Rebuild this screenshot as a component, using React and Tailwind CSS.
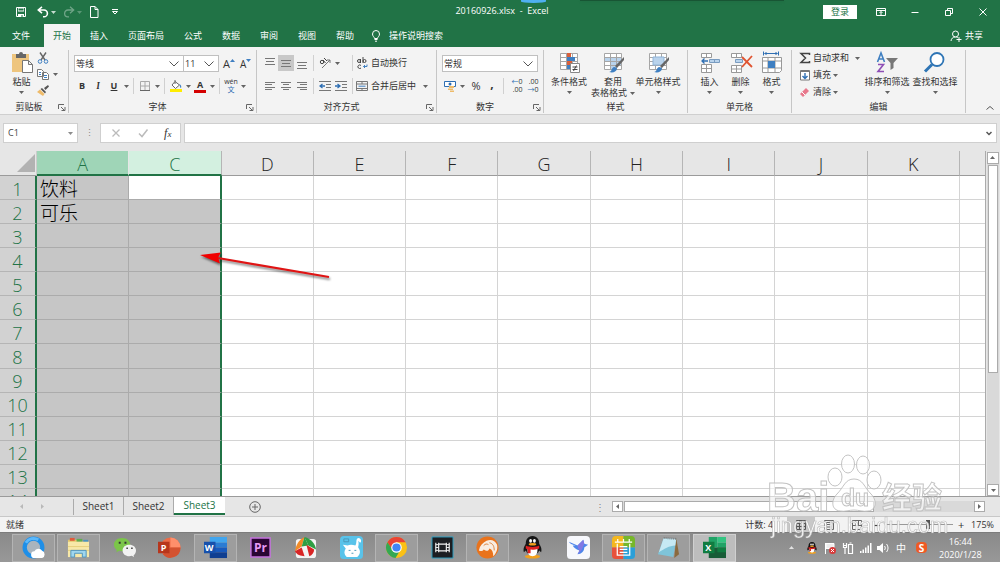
import { useState } from "react";

const COLUMNS = ["A", "C", "D", "E", "F", "G", "H", "I", "J", "K"];
const ROWS = [
  ["饮料"],
  ["可乐"],
  [], [], [], [], [], [], [], [], [], [], [], [],
];
const TABS = ["开始", "插入", "页面布局", "公式", "数据", "审阅", "视图", "帮助"];
const SHEETS = ["Sheet1", "Sheet2", "Sheet3"];

const App = () => {
  const [sheet, setSheet] = useState("Sheet3");

  return (
    <div className="flex h-screen flex-col overflow-hidden bg-[#e6e6e6] font-['Open_Sans','Noto_Sans_CJK_SC',sans-serif] text-[9px] leading-3 text-[#333]">
      <TitleBar />
      <RibbonTabs />
      <Ribbon />
      <FormulaBar />
      <Sheet />
      <SheetBar sheet={sheet} setSheet={setSheet} />
      <StatusBar />
      <Taskbar />
      <Watermark />
    </div>
  );
};

export default App;

/* ===== SMALL PARTS ===== */
const Caret = () => (
  <svg viewBox="0 0 5 3" className="h-[3px] w-[5px] shrink-0 opacity-75" fill="currentColor">
    <path d="M0 0h5L2.5 3z" />
  </svg>
);

const Chevron = () => (
  <svg viewBox="0 0 10 6" className="pointer-events-none mr-1 h-[6px] w-[10px] shrink-0" fill="none" stroke="#555">
    <path d="M.5.5 5 5 9.500.5" />
  </svg>
);

const Divider = () => <span className="mx-[3px] h-4 w-px shrink-0 bg-[#d0d0d0]" />;

const Drop = ({ label }) => (
  <button aria-label={label} className="flex h-4 w-2 items-center justify-center">
    <Caret />
  </button>
);

const IconButton = ({ label, active, children }) => (
  <button
    aria-label={label}
    className={`flex h-4 w-4 shrink-0 items-center justify-center ${active ? "bg-[#c8c8c8]" : ""}`}
  >
    {children}
  </button>
);

const Icon = ({ size = 12, className = "", children }) => (
  <svg viewBox={`0 0 ${size} ${size}`} width={size} height={size} fill="none" className={`shrink-0 ${className}`}>
    {children}
  </svg>
);

const Lines = ({ rows }) => (
  <Icon>
    {rows.map(([x, y, w]) => (
      <path key={y} d={`M${x} ${y}.5h${w}`} stroke="#777" />
    ))}
  </Icon>
);

const Combo = ({ label, value, className }) => (
  <label className={`flex h-[17px] items-center border border-[#c0c0c0] bg-white ${className}`}>
    <select aria-label={label} defaultValue={value} className="min-w-0 flex-1 appearance-none bg-transparent pl-px outline-none">
      <option>{value}</option>
    </select>
    <Chevron />
  </label>
);

/* ===== TITLE BAR ===== */
const TitleBar = () => (
  <header className="relative flex h-6 shrink-0 items-center bg-[#217346] text-white">
    <div className="flex flex-1 items-center pl-[15px]">
      <button aria-label="保存" className="mr-[10px]">
        <Icon>
          <path d="M1.500 1.500h9v9h-9z" stroke="currentColor" />
          <path d="M3 2h6v3.500H3zM3 8h6v3H3z" fill="currentColor" />
          <path d="M3.500 2.500h5v2h-5zM6.500 9h1v2h-1z" fill="#217346" />
        </Icon>
      </button>
      <button aria-label="撤消">
        <Icon>
          <path d="M5 .8 1.300 4 5 7.200M1.500 4H7a3.200 3.200 0 0 1 0 6.800H6" stroke="currentColor" strokeWidth="1.600" />
        </Icon>
      </button>
      <Drop label="撤消选项" />
      <button aria-label="恢复" className="ml-[6px] opacity-35">
        <Icon>
          <path d="m7 .8 3.700 3.200L7 7.200M10.500 4H5a3.200 3.200 0 0 0 0 6.800h1" stroke="currentColor" strokeWidth="1.300" />
        </Icon>
      </button>
      <span className="opacity-35"><Drop label="恢复选项" /></span>
      <button aria-label="新建" className="ml-[5px]">
        <Icon>
          <path d="M2.500.500h4.500l3 3v8h-7.500zM7 .500v3h3" stroke="currentColor" />
        </Icon>
      </button>
      <button aria-label="自定义快速访问工具栏" className="ml-[9px]">
        <Icon>
          <path d="M3 3.500h6M3.500 5.500h5L6 8z" stroke="currentColor" />
        </Icon>
      </button>
    </div>
    <h1 className="whitespace-pre pb-[2px]">20160926.xlsx  -  Excel</h1>
    <div className="flex flex-1 items-center justify-end gap-[22px] pr-[11px]">
      <button className="mr-[-4px] h-[14px] w-[34px] bg-white text-[#217346]">登录</button>
      <button aria-label="功能区显示选项">
        <Icon>
          <path d="M1.500 2.500h9v7h-9zM1.500 4.500h9M6 9V5.500M4.500 7 6 5.500 7.500 7" stroke="currentColor" />
        </Icon>
      </button>
      <button aria-label="最小化">
        <Icon><path d="M2.500 6.500h7" stroke="currentColor" /></Icon>
      </button>
      <button aria-label="还原">
        <Icon><path d="M2.500 4.500h5v5h-5zM4.500 4V2.500h5v5H8" stroke="currentColor" /></Icon>
      </button>
      <button aria-label="关闭">
        <Icon><path d="m2.500 2.500 7 7m0-7-7 7" stroke="currentColor" /></Icon>
      </button>
    </div>
    <span className="absolute left-[521px] top-0 h-[3px] w-[25px] rounded-b-[100%] bg-[#4fb0f0]" />
    <span className="absolute left-[580px] top-0 h-px w-[204px] bg-[#185534] shadow-sm" />
  </header>
);

/* ===== RIBBON TABS ===== */
const RibbonTabs = () => (
  <nav className="flex h-[23px] shrink-0 items-stretch bg-[#217346] text-white">
    <button className="w-[44px] pr-[2px]">文件</button>
    {TABS.map((tab) => (
      <button
        key={tab}
        className={tab === "开始" ? "w-9 bg-[#f3f3f3] text-[#217346]" : "px-[9.500px] px-[10px]"}
      >
        {tab}
      </button>
    ))}
    <label className="ml-[6px] flex items-center gap-[7px]">
      <Icon>
        <path d="M4.500 8.500C4.500 7 2.500 6.500 2.500 4a3.500 3.500 0 0 1 7 0c0 2.500-2 3-2 4.500zM4.500 9.500h3M5 11.200h2" stroke="currentColor" />
      </Icon>
      <input placeholder="操作说明搜索" className="w-20 bg-transparent outline-none placeholder:text-white" />
    </label>
    <button className="ml-auto flex items-center gap-[3px] pr-[17px]">
      <Icon>
        <path d="M1 11c.3-2.500 2-4 4-4M5.500 7a3 3 0 1 0 0-6 3 3 0 0 0 0 6zm0 0c1.500 0 2 .500 2.500 1M9 7v5M6.500 9.500h5" stroke="currentColor" />
      </Icon>
      共享
    </button>
  </nav>
);

/* ===== RIBBON ===== */
const Group = ({ title, launcher, className, children }) => (
  <section className={`flex shrink-0 flex-col border-r border-[#c6c6c6] ${className}`}>
    <div className="flex-1">{children}</div>
    <div className="flex h-3 items-center">
      <h2 className="flex-1 text-center">{title}</h2>
      {launcher && (
        <button aria-label={`${title}设置`} className="mr-[2px]">
          <Icon size={8}>
            <path d="M.5 6V1.500H6M3 4l3.500 3.500M7 4v3.500H3.500" stroke="#666" />
          </Icon>
        </button>
      )}
    </div>
  </section>
);

const BigButton = ({ icon, label, second, className }) => (
  <button className={`flex flex-col items-center whitespace-nowrap ${className}`}>
    {icon}
    <span className="mt-[2px]">{label}</span>
    {second ? (
      <span className="flex items-center gap-[3px] leading-[10px]">{second}<Caret /></span>
    ) : (
      <span className="mt-[3px]"><Caret /></span>
    )}
  </button>
);

const Grid = ({ children }) => (
  <Icon size={24}>
    <path d="M3.500 3.500h17v16h-17zM3.500 7.500h17M3.500 11.500h17M3.500 15.500h17M9.500 3.500v16M15.500 3.500v16" fill="#fff" stroke="#a6a6a6" />
    {children}
  </Icon>
);

const Brush = () => (
  <>
    <path d="m23 7-9 9 2 2 7-8z" fill="#666" />
    <path d="M8 22c3 0 2-4 5-5 2 0 3 1 3 2-1 3-4 4-8 3z" fill="#3f7fc1" />
  </>
);

const Ribbon = () => (
  <div className="flex h-[68px] shrink-0 border-b border-[#cfcfcf] bg-[#f3f3f3] pb-px pt-[3px]">
    <Group title="剪贴板" launcher className="w-[69px]">
      <div className="flex pl-2">
        <BigButton
          label="粘贴"
          className="w-[27px]"
          icon={
            <Icon size={24}>
              <path d="M2 4h17v18H2z" fill="#eec57e" />
              <path d="M6 4h3a2 2 0 0 1 4 0h3v4H6z" fill="#666" />
              <path d="M12.500 10.500h6l4 4v8h-10zM18.500 10.500v4h4" fill="#fff" stroke="#777" />
            </Icon>
          }
        />
        <div className="flex flex-col">
          <IconButton label="剪切">
            <Icon>
              <path d="M3 .500 8 8M9 .500 4 8" stroke="#666" strokeWidth="1.400" />
              <circle cx="3" cy="9.500" r="1.800" stroke="#3f7fc1" />
              <circle cx="9" cy="9.500" r="1.800" stroke="#3f7fc1" />
            </Icon>
          </IconButton>
          <div className="flex">
            <IconButton label="复制">
              <Icon>
                <path d="M.5 1.500h4l2 2v5h-6zM5.500 4.500h4l2 2v5h-6z" fill="#fff" stroke="#777" />
                <path d="M7 7.500h3M7 9.500h3M2 4.500h2M2 6.500h2" stroke="#3f7fc1" />
              </Icon>
            </IconButton>
            <Drop label="复制选项" />
          </div>
          <IconButton label="格式刷">
            <Icon>
              <path d="m11 1-4 3 1.500 2L12 2.500zM5 4l4 4-1 1.500L3.500 5z" fill="#555" />
              <path d="M3 5.500 7.500 10 6 12l-6-4z" fill="#eebb6a" />
            </Icon>
          </IconButton>
        </div>
      </div>
    </Group>

    <Group title="字体" launcher className="w-[188px]">
      <div className="flex flex-col gap-[6px] pl-[5px] pt-[5px]">
        <div className="flex items-center">
          <Combo label="字体" value="等线" className="w-[110px]" />
          <Combo label="字号" value="11" className="w-[35px] border-l-0" />
          <button aria-label="增大字号" className="ml-[4px] flex text-[11px]">A<span className="text-[#3f7fc1]"><Icon size={5}><path d="M0 4 2.500 1 5 4z" fill="currentColor" /></Icon></span></button>
          <button aria-label="减小字号" className="ml-[5px] flex text-[10px]">A<span className="text-[#3f7fc1]"><Icon size={5}><path d="M0 1h5L2.500 4z" fill="currentColor" /></Icon></span></button>
        </div>
        <div className="flex items-center">
          <IconButton label="加粗"><b>B</b></IconButton>
          <IconButton label="倾斜"><b className="font-serif italic">I</b></IconButton>
          <IconButton label="下划线"><b className="underline">U</b></IconButton>
          <Drop label="下划线选项" />
          <Divider />
          <IconButton label="边框">
            <Icon>
              <path d="M1.500 1.500h9v9h-9zM6 1.500v9M1.500 6h9" stroke="#aaa" />
              <path d="M1 10.500h10" stroke="#666" />
            </Icon>
          </IconButton>
          <Drop label="边框选项" />
          <Divider />
          <IconButton label="填充颜色">
            <Icon>
              <path d="m5 1.500 4.500 3.500-4 3.500L2 5z" fill="#fff" stroke="#666" />
              <path d="M5 0v4" stroke="#666" />
              <path d="M9.500 4c2 1 2 3 1.500 4-1 0-1-2-1.500-4z" fill="#3f7fc1" />
              <path d="M0 9h12v3H0z" fill="#ffed00" />
            </Icon>
          </IconButton>
          <Drop label="填充颜色选项" />
          <IconButton label="字体颜色">
            <span className="w-3 border-b-[3px] border-[#d40000] text-center font-bold leading-[10px]">A</span>
          </IconButton>
          <Drop label="字体颜色选项" />
          <Divider />
          <IconButton label="拼音">
            <span className="text-center text-[7px] leading-[8px]">wén<br /><span className="text-[#2f6fb3]">文</span></span>
          </IconButton>
          <Drop label="拼音选项" />
        </div>
      </div>
    </Group>

    <Group title="对齐方式" launcher className="w-[180px]">
      <div className="flex flex-col gap-[7px] pl-[5px] pt-[5px]">
        <div className="flex items-center">
          <IconButton label="顶端对齐"><Lines rows={[[1, 1, 10], [2, 4, 8], [1, 7, 10]]} /></IconButton>
          <IconButton label="垂直居中" active><Lines rows={[[1, 3, 10], [2, 6, 8], [1, 9, 10]]} /></IconButton>
          <IconButton label="底端对齐"><Lines rows={[[1, 5, 10], [2, 8, 8], [1, 11, 10]]} /></IconButton>
          <Divider />
          <IconButton label="方向">
            <Icon>
              <path d="m3 11 8-8M11 6V3H8" stroke="#777" />
              <circle cx="3" cy="5" r="1.700" stroke="#444" />
              <path d="m4 3 2.500 3M5 1l3 3" stroke="#444" />
            </Icon>
          </IconButton>
          <Drop label="方向选项" />
          <span className="w-2" />
          <Divider />
          <button className="flex items-center gap-[3px] whitespace-nowrap">
            <Icon>
              <circle cx="3" cy="4" r="1.500" stroke="#444" />
              <path d="M4.500 2v4M7 0v6" stroke="#444" />
              <circle cx="8.500" cy="4" r="1.500" stroke="#444" />
              <path d="M5 8.500a1.800 1.800 0 1 0 0 2.500" stroke="#444" />
              <path d="M11 7.500v2H7.500M9 8 7.500 9.500 9 11" stroke="#3f7fc1" />
            </Icon>
            自动换行
          </button>
        </div>
        <div className="flex items-center">
          <IconButton label="左对齐"><Lines rows={[[1, 2, 10], [1, 4, 7], [1, 7, 10], [1, 9, 7]]} /></IconButton>
          <IconButton label="居中"><Lines rows={[[1, 2, 10], [3, 4, 6], [1, 7, 10], [3, 9, 6]]} /></IconButton>
          <IconButton label="右对齐"><Lines rows={[[1, 2, 10], [4, 4, 7], [1, 7, 10], [4, 9, 7]]} /></IconButton>
          <Divider />
          <IconButton label="减少缩进量">
            <Icon>
              <path d="M0 1.500h12M7 4.500h5M7 7.500h5M0 10.500h12" stroke="#777" />
              <path d="M6 6H1m2.500-2L1 6l2.500 2" stroke="#2f6fb3" strokeWidth="1.300" />
            </Icon>
          </IconButton>
          <IconButton label="增加缩进量">
            <Icon>
              <path d="M0 1.500h12M7 4.500h5M7 7.500h5M0 10.500h12" stroke="#777" />
              <path d="M0 6h5M2.500 4 5 6 2.500 8" stroke="#2f6fb3" strokeWidth="1.300" />
            </Icon>
          </IconButton>
          <Divider />
          <button className="flex items-center gap-[3px] whitespace-nowrap">
            <Icon>
              <path d="M.5 1.500h11v9H.5zM.5 4h11M.5 8.500h11M6 1.500V4M6 8.500v2" stroke="#777" />
              <path d="M2.500 6.200h7" stroke="#3f7fc1" />
            </Icon>
            合并后居中
          </button>
          <span className="w-[5px]" />
          <Drop label="合并选项" />
        </div>
      </div>
    </Group>

    <Group title="数字" launcher className="w-[107px]">
      <div className="flex flex-col gap-[6px] pl-[5px] pt-[5px]">
        <Combo label="数字格式" value="常规" className="w-[96px]" />
        <div className="flex items-center">
          <IconButton label="会计数字格式">
            <Icon>
              <path d="M.5 1.500h11v5H.5z" fill="#fff" stroke="#2f6fb3" />
              <circle cx="6" cy="4" r="1.500" fill="#2f6fb3" />
              <path d="M5 6h5v2H5zM4 8.500h5v1.500H4zM6 10.500h4V12H6z" fill="#eebb6a" />
            </Icon>
          </IconButton>
          <Drop label="货币选项" />
          <span className="ml-[2px]"><IconButton label="百分比样式"><span className="text-[11px]">%</span></IconButton></span>
          <IconButton label="千位分隔样式"><b className="pb-1 text-[12px]">,</b></IconButton>
          <Divider />
          <span className="w-[2px]" />
          <IconButton label="增加小数位数">
            <span className="text-right text-[7px] leading-[8px]"><span className="text-[#2f6fb3]">←</span>0<br />.00</span>
          </IconButton>
          <IconButton label="减少小数位数">
            <span className="text-right text-[7px] leading-[8px]">.00<br /><span className="text-[#2f6fb3]">→</span>0</span>
          </IconButton>
        </div>
      </div>
    </Group>

    <Group title="样式" className="w-[144px]">
      <div className="flex pl-[3px]">
        <BigButton
          label="条件格式"
          className="w-[44px]"
          icon={
            <Grid>
              <path d="M10 3h4v4h-4zM10 11h5v4h-5z" fill="#d9603b" />
              <path d="M10 7h8v4h-8zM10 15h3v4h-3z" fill="#3f7fc1" />
              <path d="M13.500 13.500h9v9h-9z" fill="#fff" stroke="#888" />
              <path d="M15.500 17h5M15.500 19.500h5M19.500 15.500l-3 5.500" stroke="#444" />
            </Grid>
          }
        />
        <BigButton
          label="套用"
          second="表格格式"
          className="w-[44px]"
          icon={
            <Grid>
              <path d="M10 8h5v3h-5zM16 8h4v3h-4zM10 12h5v3h-5zM16 12h4v3h-4zM10 16h5v3h-5zM4 8h5v3H4z" fill="#b9d3ec" />
              <Brush />
            </Grid>
          }
        />
        <BigButton
          label="单元格样式"
          className="w-[46px]"
          icon={
            <Grid>
              <path d="M7 7h11v8H7z" fill="#b9d3ec" stroke="#8fb4d9" />
              <Brush />
            </Grid>
          }
        />
      </div>
    </Group>

    <Group title="单元格" className="w-[104px]">
      <div className="flex pl-[6px]">
        <BigButton
          label="插入"
          className="w-[31px]"
          icon={
            <Icon size={24}>
              <path d="M3.500 3.500h10v4h-10zM8.500 3.500v4M3.500 14.500h10v8h-10zM8.500 14.500v8M3.500 18.500h10" fill="#fff" stroke="#999" />
              <path d="M11.500 9.500h10v3h-10zM16.500 9.500v3" fill="#b9d3ec" stroke="#7a9cc0" />
              <path d="M10 11H4m2.500-2.500L4 11l2.500 2.500" stroke="#2f6fb3" strokeWidth="1.300" />
            </Icon>
          }
        />
        <BigButton
          label="删除"
          className="w-[31px]"
          icon={
            <Icon size={24}>
              <path d="M2.500 3.500h10v4h-10zM7.500 3.500v4M2.500 15.500h10v7h-10zM7.500 15.500v7M2.500 19h10" fill="#fff" stroke="#999" />
              <path d="M6.500 9.500h7v3h-7z" fill="#b9d3ec" stroke="#7a9cc0" />
              <path d="m13 7 10 10M23 6 13 17" stroke="#e0532f" strokeWidth="1.800" />
            </Icon>
          }
        />
        <BigButton
          label="格式"
          className="w-[31px]"
          icon={
            <Icon size={24}>
              <path d="M2.500 7.500h19v13l-2 2h-17zM2.500 11h19M2.500 18h19M8 7.500v15M15 7.500v15" fill="#fff" stroke="#999" />
              <path d="M8 11h7v7H8z" fill="#3f7fc1" />
              <path d="M3.500 1.500v4M18.500 1.500v4M4.500 3.500h13M6.500 2 5 3.500 6.500 5M15.500 2 17 3.500 15.500 5" stroke="#2f6fb3" />
            </Icon>
          }
        />
      </div>
    </Group>

    <Group title="编辑" className="w-[174px]">
      <div className="flex pl-[7px]">
        <div className="flex w-[64px] flex-col gap-px whitespace-nowrap">
          <button className="flex h-4 items-center gap-[2px]">
            <Icon><path d="M10.500 3V1.500H2L6.500 6 2 10.500h8.500V9" stroke="#444" strokeWidth="1.500" /></Icon>
            自动求和<span className="ml-[4px]"><Caret /></span>
          </button>
          <button className="flex h-4 items-center gap-[2px]">
            <Icon>
              <path d="M1.500 1.500h9v9.500h-9z" fill="#fff" stroke="#777" />
              <path d="M1 2.500h10" stroke="#777" />
              <path d="M6 4v5.500M3.500 7 6 9.500 8.500 7" stroke="#2f6fb3" strokeWidth="1.400" />
            </Icon>
            填充<Caret />
          </button>
          <button className="flex h-4 items-center gap-[2px]">
            <Icon>
              <path d="m1 8 6-6 3 3-6 6z" fill="#e8788c" />
              <path d="m3 6 3 3" stroke="#fff" />
            </Icon>
            清除<Caret />
          </button>
        </div>
        <BigButton
          label="排序和筛选"
          className="w-12"
          icon={
            <Icon size={24}>
              <path d="m2.500 12 3.500-9 3.500 9M3.500 9h5" stroke="#3f7fc1" strokeWidth="1.600" />
              <path d="M3 14.500h5.500L3 21.500h6" stroke="#8e4fb5" strokeWidth="1.600" />
              <path d="M11 8h12l-4.500 5v5l-3 2v-7z" fill="#777" />
            </Icon>
          }
        />
        <BigButton
          label="查找和选择"
          className="w-12"
          icon={
            <Icon size={24}>
              <circle cx="14" cy="9.500" r="6.500" fill="#fff" stroke="#2f75b5" strokeWidth="1.800" />
              <path d="m9 14.500-7 7" stroke="#2f75b5" strokeWidth="3" />
            </Icon>
          }
        />
      </div>
    </Group>

    <button aria-label="折叠功能区" className="ml-auto mr-[5px] self-end">
      <Icon size={10}><path d="m1.500 6.500 3.500-3 3.500 3" stroke="#555" /></Icon>
    </button>
  </div>
);

/* ===== FORMULA BAR ===== */
const FormulaBar = () => (
  <div className="flex h-[36px] shrink-0 items-center gap-[3px] px-[3px]">
    <label className="flex h-5 w-[75px] items-center border border-[#cfcfcf] bg-white pr-1 text-[#666]">
      <input aria-label="名称框" defaultValue="C1" className="min-w-0 flex-1 bg-transparent pl-1 text-[#444] outline-none" />
      <Caret />
    </label>
    <span className="w-4 text-center text-[#888]">⋮</span>
    <div className="flex h-5 w-[81px] items-center justify-around border border-[#cfcfcf] bg-white px-px">
      <button aria-label="取消"><Icon><path d="m2.500 2.500 7 7m0-7-7 7" stroke="#bbb" strokeWidth="1.300" /></Icon></button>
      <button aria-label="输入"><Icon><path d="m2 6.500 3 3 5.500-7" stroke="#bbb" strokeWidth="1.500" /></Icon></button>
      <button aria-label="插入函数" className="font-['Liberation_Serif',serif] text-[12px] italic">
        f<span className="text-[9px]">x</span>
      </button>
    </div>
    <label className="flex h-5 min-w-0 flex-1 items-center border border-[#cfcfcf] bg-white pr-1">
      <input aria-label="编辑栏" className="min-w-0 flex-1 bg-transparent px-1 outline-none" />
      <svg viewBox="0 0 6 5" className="h-[5px] w-[6px]" fill="none" stroke="#555" strokeWidth="1.500">
        <path d="m.5 1 2.500 2.500L5.500 1" />
      </svg>
    </label>
  </div>
);

/* ===== SHEET ===== */
const cellClass = (row, col) => {
  if (col === 0) return "border-[#ababab] bg-[#c6c6c6]";
  if (col === 1) {
    return row === 0
      ? "border-r-2 border-b-[#ababab] border-r-[#217346] bg-white"
      : "border-r-2 border-b-[#ababab] border-r-[#217346] bg-[#c6c6c6]";
  }
  return "border-[#d4d4d4] bg-white";
};

const headClass = (col) => {
  if (col === 0) return "pt-[3px] border-b-2 border-b-[#217346] border-r-[#e6e6e6] bg-[#9fd5b7] text-[#217346]";
  if (col === 1) return "pt-[3px] border-b-2 border-b-[#217346] border-r-[#b5b5b5] bg-[#d3f0e0] text-[#217346]";
  return "pt-[2px] border-b-[#9b9b9b] border-r-[#b5b5b5] text-[#222]";
};

const Sheet = () => (
  <main className="relative flex min-h-0 flex-1 overflow-hidden">
    <div className="min-w-0 flex-1 overflow-hidden border-r border-[#ababab]">
      <table className="h-[362px] w-full table-fixed border-separate border-spacing-0 text-[18px] font-light leading-5">
        <thead>
          <tr>
            <th className="h-6 w-[37px] border-b border-r border-b-[#9b9b9b] border-r-[#ccc] p-0" aria-label="全选">
              <svg viewBox="0 0 18 18" className="ml-auto mr-px h-[18px] w-[18px]" fill="#b2b2b2">
                <path d="M18 0v18H0z" />
              </svg>
            </th>
            {COLUMNS.map((name, col) => (
              <th key={name} className={`h-6 border-b border-r px-0 pb-0 font-light ${headClass(col)}`}>
                {name}
              </th>
            ))}
            <th className="w-[25px] border-b border-[#9b9b9b] p-0" />
          </tr>
        </thead>
        <tbody>
          {ROWS.map((cells, row) => (
            <tr key={row}>
              <th className="h-6 border-b border-r-2 border-b-[#b5b5b5] border-r-[#217346] bg-[#d2d2d2] p-0 pt-[2px] font-light text-[#217346]">
                {row + 1}
              </th>
              {COLUMNS.map((name, col) => (
                <td key={name} className={`h-6 border-b border-r p-0 pl-[3px] pt-[2px] text-[19px] text-black ${cellClass(row, col)}`}>
                  {cells[col]}
                </td>
              ))}
              <td className="border-b border-[#d4d4d4] bg-white p-0" />
            </tr>
          ))}
        </tbody>
      </table>
    </div>

    {/* Vertical scroll bar */}
    <div className="ml-px mr-px mt-px flex w-3 flex-col bg-[#d9d9d9]">
      <button aria-label="向上滚动" className="flex h-3 rotate-180 items-center justify-center border border-[#ababab] bg-white">
        <Caret />
      </button>
      <div className="mx-px mt-px h-[208px] border border-[#ababab] bg-white" />
      <button aria-label="向下滚动" className="mt-auto flex h-3 items-center justify-center border border-[#ababab] bg-white">
        <Caret />
      </button>
    </div>

    {/* Pointer arrow drawn over the cells */}
    <svg viewBox="0 0 140 40" className="pointer-events-none absolute left-[196px] top-[95px] h-10 w-[140px] drop-shadow-[1px_2px_1px_rgba(0,0,0,0.5)]">
      <path d="m22 12 111 19" stroke="#e01414" strokeWidth="2.200" />
      <path d="M4 9 25 6.500l-3 5 2 6z" fill="#f00000" />
    </svg>
  </main>
);

/* ===== SHEET TABS ===== */
const SheetBar = ({ sheet, setSheet }) => (
  <div className="flex h-5 shrink-0 items-center border-t border-[#9b9b9b] text-[10px]">
    <div className="flex h-4 w-[74px] items-center gap-4 border-r border-[#ababab] pl-[19px] text-[#aaa]">
      <button aria-label="上一个工作表" className="rotate-90"><Caret /></button>
      <button aria-label="下一个工作表" className="-rotate-90"><Caret /></button>
    </div>
    {SHEETS.map((name) => (
      <button
        key={name}
        onClick={() => setSheet(name)}
        className={`h-[18px] self-start ${
          name === sheet ? "w-[51px] border-b-2 border-[#217346] bg-white text-[#217346]" : "w-[50px] border-r border-[#ababab]"
        }`}
      >
        {name}
      </button>
    ))}
    <button aria-label="新工作表" className="ml-[24px]">
      <Icon><path d="M6 3v6M3 6h6M6 .700a5.300 5.300 0 1 0 0 10.600A5.300 5.300 0 0 0 6 .700z" stroke="#666" /></Icon>
    </button>
    <span className="ml-auto w-[10px] text-center text-[#888]">⋮</span>
    <div className="ml-[7px] mr-[15px] flex h-[11px] w-[373px] bg-[#d9d9d9]">
      <button aria-label="向左滚动" className="flex w-[11px] items-center justify-center border border-[#ababab] bg-white">
        <span className="flex rotate-90"><Caret /></span>
      </button>
      <div className="ml-px w-[250px] border border-[#ababab] bg-white" />
      <button aria-label="向右滚动" className="ml-auto flex w-[11px] items-center justify-center border border-[#ababab] bg-white">
        <span className="flex -rotate-90"><Caret /></span>
      </button>
    </div>
  </div>
);

/* ===== STATUS BAR ===== */
const StatusBar = () => (
  <footer className="flex h-4 shrink-0 items-center border-t border-[#c8c8c8] bg-[#f3f3f3] pl-[6px] pr-[6px]">
    <span>就绪</span>
    <span className="ml-auto mr-[14px]">计数: 4</span>
    <button aria-label="普通" className="flex h-full w-[28px] items-center justify-center bg-[#c8c8c8]">
      <Icon><path d="M1.500 1.500h9v9h-9zM1.500 4.500h9M1.500 7.500h9M4.500 1.500v9M7.500 1.500v9" stroke="#555" /></Icon>
    </button>
    <button aria-label="页面布局" className="flex w-[28px] justify-center">
      <Icon><path d="M1.500 1.500h9v9h-9zM3.500 3.500h5v7h-5zM3.500 5.500h5M3.500 8h5" stroke="#666" /></Icon>
    </button>
    <button aria-label="分页预览" className="flex w-[28px] justify-center">
      <Icon><path d="M1.500 1.500h9v9h-9zM4.500 1.500v5h3v-5M1.500 6.500h9" stroke="#666" /></Icon>
    </button>
    <button aria-label="缩小" className="ml-[2px] flex w-2 justify-center">
      <Icon size={6}><path d="M0 3.500h6" stroke="#444" strokeWidth="1.200" /></Icon>
    </button>
    <input
      type="range"
      aria-label="缩放"
      min="10"
      max="270"
      defaultValue="175"
      className="mx-1 h-3 w-[68px] appearance-none bg-[linear-gradient(#999,#999)] bg-[length:100%_1px] bg-center bg-no-repeat [&::-webkit-slider-thumb]:h-[9px] [&::-webkit-slider-thumb]:w-1 [&::-webkit-slider-thumb]:appearance-none [&::-webkit-slider-thumb]:bg-[#555]"
    />
    <button aria-label="放大" className="w-2 text-[11px]">+</button>
    <span className="ml-[6px]">175%</span>
  </footer>
);

/* ===== TASKBAR ===== */
function Penguin() {
  return (
    <>
      <ellipse cx="12" cy="21.500" rx="8" ry="2" fill="#f3a11c" />
      <path d="M12 0C7 0 5 4 5 8c-2 3-3 6-2 9l2-2c2 6 12 6 14 0l2 2c1-3 0-6-2-9 0-4-2-8-7-8z" fill="#151515" />
      <path d="M7 12c-1 7 2 9 5 9s6-2 5-9z" fill="#fff" />
      <ellipse cx="10" cy="5" rx="1.500" ry="2" fill="#fff" />
      <ellipse cx="14" cy="5" rx="1.500" ry="2" fill="#fff" />
      <ellipse cx="12" cy="8.500" rx="4" ry="1.300" fill="#f3a11c" />
      <path d="M5 10c4 2 10 2 14 0v3c-3 1-7 1.500-9 1.200V18H7v-4l-2-1z" fill="#e02020" />
    </>
  );
}

const APPS = [
  {
    name: "QQ浏览器",
    open: true,
    art: (
      <>
        <circle cx="12" cy="12" r="9.200" fill="#aab4bd" stroke="#1f8fe8" strokeWidth="4.500" />
        <path d="M4 7a9.500 9.500 0 0 1 13-3" stroke="#5bb8fb" strokeWidth="3" />
        <path d="M13 23a3.500 3.500 0 0 1 0-7 4.500 4.500 0 0 1 8-.5 4 4 0 0 1 0 7.500z" fill="#fff" />
      </>
    ),
  },
  {
    name: "文件资源管理器",
    open: true,
    art: (
      <>
        <path d="M1 4h9l2 2h10v16H1z" fill="#e3c76c" />
        <path d="M3 2h5v3H3z" fill="#e05a3a" />
        <path d="M10 3h6v3h-6z" fill="#5fae4f" />
        <path d="M17 4h5v3h-5z" fill="#4d93bd" />
        <path d="M1 6h22v16H1z" fill="#f7e8a8" />
        <path d="M1 11h22M1 15h22" stroke="#e5cf7c" />
        <path d="M4 22v-7h16v7h-4v-4H8v4z" fill="#9fd6ee" stroke="#4d93bd" />
      </>
    ),
  },
  {
    name: "微信",
    art: (
      <>
        <path d="M9.500 2C4.500 2 1 5 1 9c0 2 1 4 3 5.500L3.500 17l3-1.500c1 .3 2 .5 3 .5 5 0 8.500-3 8.500-7s-3.500-7-8.500-7z" fill="#7bc549" />
        <path d="M17 9c-4 0-7 2.500-7 6s3 6 7 6c1 0 2-.2 2.500-.5l2.500 1.500-.5-2c1.500-1 2.500-3 2.500-5 0-3.500-3-6-7-6z" fill="#f2f2f2" />
        <path d="M6 6h2v2H6zM12 6h2v2h-2zM14 12h1.500v1.500H14zM19 12h1.500v1.500H19z" fill="#333" />
      </>
    ),
  },
  {
    name: "PowerPoint",
    art: (
      <>
        <circle cx="13" cy="12" r="10.500" fill="#ed6c47" />
        <path d="M13 1.500A10.500 10.500 0 0 1 23.500 12H13z" fill="#ff8f6b" />
        <path d="M13 12h10.500A10.500 10.500 0 0 1 5 19z" fill="#d35230" />
        <path d="M0 6h12v12H0z" fill="#b7361c" />
      </>
    ),
    letter: "P",
  },
  {
    name: "Word",
    open: true,
    art: (
      <>
        <path d="M6 1h18v6H6z" fill="#41a5ee" />
        <path d="M6 7h18v5H6z" fill="#2b7cd3" />
        <path d="M6 12h18v5H6z" fill="#185abd" />
        <path d="M6 17h18v6H6z" fill="#103f91" />
        <path d="M0 6h12v12H0z" fill="#1751ac" />
      </>
    ),
    letter: "W",
  },
  {
    name: "Premiere",
    art: <path d="M2 2h20v20H2z" fill="#2a0634" stroke="#c875e0" strokeWidth="1.500" />,
    letter: "Pr",
  },
  {
    name: "FastStone",
    art: (
      <>
        <rect x="2" y="3" width="21" height="20" rx="3" fill="#f4f4f4" />
        <path d="M11 1C5 4 2 9 1 16l7-5z" fill="#f28c28" />
        <path d="M11 1c7 2 11 7 12 13l-8-4z" fill="#2f9e44" />
        <path d="m11 1 4 9-7 1z" fill="#2f9e44" />
        <path d="m13 9 8 5c0 3-2 6-5 7z" fill="#d92525" />
        <path d="m1 16 7-4 3 9c-4 0-8-1-10-5z" fill="#d92525" />
      </>
    ),
  },
  {
    name: "云兔",
    art: (
      <>
        <rect width="24" height="24" rx="4" fill="#59c3ea" />
        <path d="M7 22c-3-3-3-6-1-9L3 9l5 1c2-1 5-1 8 0 2-3 0-7 3-8 3 0 4 4 2 5l-2-2c1 4 0 5 0 7 3 4 2 7-1 10z" fill="#fff" />
        <path d="M9 15h2M15 15h2M12 18h2M4 3h5v3H4z" stroke="#4b98b8" />
      </>
    ),
  },
  {
    name: "Chrome",
    open: true,
    art: (
      <>
        <circle cx="12" cy="12" r="11" fill="#fbc116" />
        <path d="M12 1a11 11 0 0 1 9.500 5.500H12L7 14 2.500 6.500A11 11 0 0 1 12 1z" fill="#ea4335" />
        <path d="M2.500 6.500A11 11 0 0 0 11 23l5-8.500H8z" fill="#34a853" />
        <circle cx="12" cy="12" r="5.500" fill="#fff" />
        <circle cx="12" cy="12" r="4.300" fill="#4285f4" />
      </>
    ),
  },
  {
    name: "视频编辑",
    art: (
      <>
        <path d="M1 1h22v22H1z" fill="#1c1e22" stroke="#2fa3c7" />
        <path d="M5 7v10M19 7v10M8 7v10M16 7v10M8 8.500h8M8 15.500h8" stroke="#f2f2f2" strokeWidth="1.200" />
        <path d="M5 9h3M5 12h3M5 15h3M16 9h3M16 12h3M16 15h3" stroke="#f2f2f2" />
      </>
    ),
  },
  {
    name: "猎豹",
    open: true,
    art: (
      <>
        <circle cx="12" cy="12" r="11.500" fill="#e9731c" />
        <path d="M3 15c1-5 4-8 8-10 5-2 9 0 11 4 1 5-1 9-4 12 0-4-1-7-4-8-1 3-3 3-6 1-1 2-3 2-5 1z" fill="#f8ede2" />
        <path d="M8 10c2-2 3-2 5-1M14 7c4 1 5 4 5 8" stroke="#d9823f" />
      </>
    ),
  },
  { name: "QQ", art: <Penguin /> },
  {
    name: "迅雷",
    art: (
      <>
        <rect width="24" height="24" rx="4" fill="#f7f8fc" />
        <path d="M2 6l9 4 6-6 1 4 4 1-4 3c0 4-3 7-7 7l2-4c-4-1-6-3-7-5h3C5 9 3 8 2 6z" fill="#4d86ea" />
        <path d="m11 10 6-6 1 4c-2 5-3 8-7 11l2-4c-1-1-2-3-2-5z" fill="#8279e4" />
      </>
    ),
  },
  {
    name: "图表",
    open: true,
    art: (
      <>
        <path d="M0 4a4 4 0 0 1 4-4h8v12H0z" fill="#f4b81f" />
        <path d="M12 0h8a4 4 0 0 1 4 4v8H12z" fill="#76b72a" />
        <path d="M0 12h12v12H4a4 4 0 0 1-4-4z" fill="#e8523c" />
        <path d="M12 12h12v8a4 4 0 0 1-4 4h-8z" fill="#2a9fd8" />
        <path d="M5.500 8v12h13V8M3 6.500h18M6 3v4M12 3v4M18 3v4M8 11h8M8 14h8M8 17h8" stroke="#fff" strokeWidth="1.300" />
      </>
    ),
  },
  {
    name: "记事本",
    open: true,
    art: (
      <>
        <path d="m20 2 3 17-5 4z" fill="#8b6a3e" />
        <path d="M7 2 20 3l-3 19-16-3z" fill="#7fc4d9" />
        <path d="m7 2 13 1-1 7C13 10 7 14 2 17z" fill="#c6e9f3" />
        <path d="m7 2 13 1" stroke="#777" strokeWidth="2" strokeDasharray="1 1" />
      </>
    ),
  },
  {
    name: "Excel",
    open: true,
    active: true,
    art: (
      <>
        <path d="M6 1h9v11H6z" fill="#21a366" />
        <path d="M15 1h9v6h-9z" fill="#33c481" />
        <path d="M15 7h9v5h-9z" fill="#21a366" />
        <path d="M6 12h18v11H6z" fill="#185c37" />
        <path d="M15 12h9v5h-9z" fill="#107c41" />
        <path d="M0 6h12v12H0z" fill="#107c41" />
      </>
    ),
    letter: "X",
  },
];

const LETTER_CLASS = {
  P: "left-0 w-[11px] text-[9px] text-white",
  W: "left-0 w-[11px] text-[9px] text-white",
  X: "left-0 w-[11px] text-[9px] text-white",
  Pr: "left-0 w-[23px] text-[12px] text-[#e79bf5]",
};

const TaskButton = ({ app }) => {
  let frame = "border-transparent";
  if (app.active) frame = "border-[#d0d0d0] bg-[#bdbdbd]";
  else if (app.open) frame = "border-[#b4b4b4] bg-[#9d9d9d]";

  return (
    <button aria-label={app.name} className={`flex h-[28px] w-[43px] items-center justify-center border ${frame}`}>
      <span className="relative">
        <svg viewBox="0 0 24 24" className="h-[23px] w-[23px]" fill="none">{app.art}</svg>
        {app.letter && (
          <span className={`absolute inset-y-0 flex items-center justify-center font-bold ${LETTER_CLASS[app.letter]}`}>
            {app.letter}
          </span>
        )}
      </span>
    </button>
  );
};

const Taskbar = () => (
  <div className="flex h-[30px] shrink-0 items-center border-t border-[#7c7c7c] bg-linear-to-b from-[#8a8a8a] to-[#989898] text-white">
    <nav className="flex flex-1 justify-between pl-3">
      {APPS.map((app) => (
        <TaskButton key={app.name} app={app} />
      ))}
    </nav>
    <div className="flex w-[264px] items-center pl-[53px]">
      <button aria-label="显示隐藏的图标" className="mr-3 rotate-180"><Caret /></button>
      <svg viewBox="0 0 24 24" className="mr-[6px] h-3 w-3" fill="none"><Penguin /></svg>
      <Icon className="mr-[6px]">
        <path d="M1.500 1v11M2 1.500h8v5H2z" fill="#eee" stroke="#fff" />
        <circle cx="8.500" cy="8.500" r="3.500" fill="#d83a3a" />
        <path d="m7 7 3 3m0-3-3 3" stroke="#fff" />
      </Icon>
      <Icon className="mr-[6px]">
        <path d="M6.500 2.500h4v9h-4zM7.500 1h2M1 3.500h4M1.500 1v4.500h3V1M3 6v6" stroke="#fff" strokeWidth="1.200" />
      </Icon>
      <Icon className="mr-[5px]">
        <path d="M0 9h1.500v2H0zM2.500 7.500H4V11H2.500zM5 5.500h1.500V11H5zM7.500 3.500H9V11H7.500zM10 1h1.500v10H10z" fill="#fff" />
      </Icon>
      <Icon className="mr-[7px]">
        <path d="M0 4h2.500L6 1v10L2.500 8H0z" fill="#fff" />
        <path d="M7.500 4c1 1.300 1 2.700 0 4M9.500 2c2 2.500 2 5.500 0 8" stroke="#fff" />
      </Icon>
      <span className="mr-[10px] text-[10px]">中</span>
      <span className="flex h-[11px] w-[11px] items-center justify-center rounded-sm bg-[#ee5a24] text-[10px] font-bold">S</span>
      <time className="ml-[12px] text-center text-[9px] leading-[13px]">16:44<br />2020/1/28</time>
    </div>
  </div>
);

/* ===== WATERMARK ===== */
const Watermark = () => (
  <div className="pointer-events-none fixed bottom-[22px] right-[50px] h-[86px] w-[184px] font-['Liberation_Sans','Noto_Sans_CJK_SC',sans-serif]">
    <svg viewBox="0 0 184 86" className="h-full w-full" fill="#fff" fillOpacity=".6" stroke="#bdbdbd" strokeOpacity=".9">
      <ellipse cx="69" cy="23" rx="7" ry="9" />
      <ellipse cx="82" cy="10" rx="6.500" ry="9" />
      <ellipse cx="97" cy="11" rx="6.500" ry="9" />
      <ellipse cx="108" cy="26" rx="7" ry="9" />
      <path d="M88 25c9 0 10 8 17 15 6 6 6 16-3 17-5 1-9-1-14-1s-9 2-14 1c-9-1-9-11-3-17 7-7 8-15 17-15z" />
      <text x="1" y="57" fontSize="40" fontWeight="bold">Bai</text>
      <text x="75" y="52" fontSize="23" fontWeight="bold">du</text>
      <text x="116" y="54" fontSize="30" fontWeight="bold">经验</text>
      <text x="5" y="79" fontSize="22" fillOpacity=".9" stroke="#a8a8a8" strokeOpacity=".7" strokeWidth=".7">jingyan.baidu.com</text>
    </svg>
  </div>
);
